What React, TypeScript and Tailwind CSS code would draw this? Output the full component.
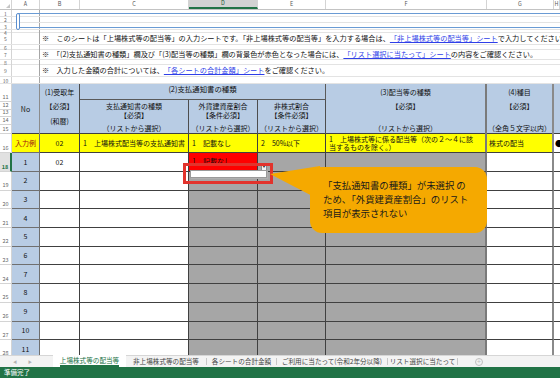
import React from 'react';

const GRID = 'grid grid-cols-[12px_28px_40px_109px_69px_68px_161px_67px_6px]';

type TopRow = { n: number; h: string; text?: React.ReactNode };

const Link = ({ children }: { children: React.ReactNode }) => (
  <span className="text-[#2f3fe8] underline decoration-[0.5px] underline-offset-[1px]">{children}</span>
);

// rows 1-10 above the table (heights picked to match the sheet)
const topRows: TopRow[] = [
  { n: 1, h: 'h-[7px]' },
  { n: 2, h: 'h-[6px]' },
  { n: 3, h: 'h-[7px]' },
  { n: 4, h: 'h-[3px]' },
  {
    n: 5,
    h: 'h-[12px]',
    text: (
      <>
        ※　このシートは「上場株式等の配当等」の入力シートです。「非上場株式等の配当等」を入力する場合は、
        <Link>「非上場株式等の配当等」シート</Link>で入力してください。
      </>
    ),
  },
  { n: 6, h: 'h-[5px]' },
  {
    n: 7,
    h: 'h-[10px]',
    text: (
      <>
        ※　「(2)支払通知書の種類」欄及び「(3)配当等の種類」欄の背景色が赤色となった場合には、
        <Link>「リスト選択に当たって」シート</Link>の内容をご確認ください。
      </>
    ),
  },
  { n: 8, h: 'h-[5px]' },
  {
    n: 9,
    h: 'h-[12px]',
    text: (
      <>
        ※　入力した金額の合計については、<Link>「各シートの合計金額」シート</Link>をご確認ください。
      </>
    ),
  },
  { n: 10, h: 'h-[7px]' },
];

const RowNum = ({ n, active }: { n: string; active?: boolean }) =>
  active ? (
    <div className="flex items-end justify-center border-b border-r-2 border-b-[#d4d4d4] border-r-[#217346] bg-[#e1e1e1] pb-[1px] text-[5.5px] font-bold leading-none text-[#217346]">
      {n}
    </div>
  ) : (
    <div className="flex items-end justify-center border-b border-r border-[#d4d4d4] bg-white pb-[1px] text-[5.5px] leading-none text-[#666]">
      {n}
    </div>
  );

const bodyRows = Array.from({ length: 10 }, (_, i) => ({ label: String(19 + i), no: String(2 + i) }));

export default function App() {
  return (
    <div className="relative h-[378px] w-[560px] overflow-hidden bg-white font-['Noto_Sans_CJK_JP','Noto_Sans',sans-serif] text-[#1a1a1a]">
      {/* column letters */}
      <div className={`${GRID} h-[10px] border-b border-[#c3c3c3] text-[5.5px] leading-none text-[#555]`}>
        <div className="relative border-r border-[#d4d4d4]">
          <span className="absolute bottom-[1px] right-[1px] border-b-[4px] border-l-[4px] border-b-[#c6c6c6] border-l-transparent" />
        </div>
        {['A', 'B', 'C', 'D', 'E', 'F', 'G', 'H'].map((c) =>
          c === 'D' ? (
            <div key={c} className="flex items-center justify-center border-b-2 border-r border-b-[#217346] border-r-[#d4d4d4] bg-[#d2d2d2] text-[#1d5b38]">
              {c}
            </div>
          ) : (
            <div key={c} className="flex items-center justify-center border-r border-[#d4d4d4]">
              {c}
            </div>
          )
        )}
      </div>

      {/* rows 1-10 */}
      {topRows.map((r) => (
        <div key={r.n} className={`${GRID} ${r.h} border-b border-[#e3e3e3]`}>
          <div className="flex items-center justify-center border-r border-[#d4d4d4] text-[5px] leading-none text-[#666]">
            {r.n}
          </div>
          <div className="border-r border-[#a6a6a6]" />
          <div className="col-span-7 flex items-center whitespace-nowrap pl-[2px] text-[7.2px] leading-none text-[#111]">
            {r.text}
          </div>
        </div>
      ))}

      {/* header rows 11-15 */}
      <div className="flex h-[50px]">
        <div className="flex w-[12px] flex-col text-[5.5px] leading-none text-[#666]">
          <div className="flex h-[18px] items-end justify-center border-b border-r border-[#d4d4d4] pb-[1px]">11</div>
          <div className="flex h-[8px] items-end justify-center border-b border-r border-[#d4d4d4] pb-[1px]">12</div>
          <div className="flex h-[7px] items-end justify-center border-b border-r border-[#d4d4d4] pb-[1px]">13</div>
          <div className="flex h-[8px] items-end justify-center border-b border-r border-[#d4d4d4] pb-[1px]">14</div>
          <div className="flex h-[9px] items-end justify-center border-b border-r border-[#d4d4d4] pb-[1px]">15</div>
        </div>
        <div className="grid flex-1 grid-cols-[28px_40px_109px_69px_68px_161px_67px_6px] grid-rows-[16px_34px] border-b border-[#404040] bg-[#b8cce4] text-[7px] leading-[9px] text-[#111]">
          <div className="row-span-2 flex items-center justify-center border-r border-[#8c8c8c]">No</div>
          <div className="row-span-2 flex flex-col items-center border-r border-[#4d4d4d] pt-[4px]">
            <span>(1)受取年</span>
            <span className="mt-[4.5px]">【必須】</span>
            <span className="mt-[6px]">(和暦)</span>
          </div>
          <div className="col-span-3 flex justify-center border-b border-r border-[#5a5a5a] text-[7.4px]">(2)支払通知書の種類</div>
          <div className="row-span-2 flex flex-col items-center border-r-2 border-[#7a7a7a] pt-[3.5px]">
            <span>(3)配当等の種類</span>
            <span className="mt-[5px]">【必須】</span>
            <span className="mt-[13px]">（リストから選択）</span>
          </div>
          <div className="row-span-2 flex flex-col items-center border-r-2 border-[#8a8a8a] pt-[3.5px]">
            <span>(4)種目</span>
            <span className="mt-[5px]">【必須】</span>
            <span className="mt-[13px]">（全角５文字以内）</span>
          </div>
          <div className="row-span-2" />
          <div className="flex flex-col items-center border-r border-[#4d4d4d] pt-[1.5px]">
            <span>支払通知書の種類</span>
            <span>【必須】</span>
            <span className="mt-[4px]">（リストから選択）</span>
          </div>
          <div className="flex flex-col items-center border-r border-[#4d4d4d] pt-[1.5px]">
            <span>外貨建資産割合</span>
            <span>【条件必須】</span>
            <span className="mt-[4px]">（リストから選択）</span>
          </div>
          <div className="flex flex-col items-center border-r border-[#4d4d4d] pt-[1.5px]">
            <span>非株式割合</span>
            <span>【条件必須】</span>
            <span className="mt-[4px]">（リストから選択）</span>
          </div>
        </div>
      </div>

      {/* data rows */}
      <div className="h-[221px] overflow-hidden text-[7px] leading-[9px] text-[#111]">
        <div className={`${GRID} h-[19px]`}>
          <RowNum n="16" />
          <div className="flex items-center justify-center border-b border-r border-[#6f6f6f] bg-[#ffff00] text-[#a01010]">入力例</div>
          <div className="flex items-center justify-center border-b border-r border-[#404040] bg-[#ffff00]">02</div>
          <div className="flex items-center overflow-hidden whitespace-nowrap border-b border-r border-[#404040] bg-[#ffff00] pl-[3px]">
            1　上場株式配当等の支払通知書
          </div>
          <div className="flex items-center overflow-hidden whitespace-nowrap border-b border-r border-[#404040] bg-[#ffff00] pl-[3px]">1　記載なし</div>
          <div className="flex items-center overflow-hidden whitespace-nowrap border-b border-r border-[#404040] bg-[#ffff00] pl-[3px]">2　50%以下</div>
          <div className="flex flex-col justify-center overflow-hidden whitespace-nowrap border-b border-r-2 border-b-[#404040] border-r-[#7a7a7a] bg-[#ffff00] pl-[3px] leading-[8.5px]">
            <span>1　上場株式等に係る配当等（次の２～４に該</span>
            <span>当するものを除く。）</span>
          </div>
          <div className="flex items-center overflow-hidden whitespace-nowrap border-b border-r-2 border-b-[#404040] border-r-[#8a8a8a] bg-[#ffff00] pl-[2px]">株式の配当</div>
          <div className="flex items-center overflow-hidden border-b border-[#404040] pl-[1px] text-[8px] text-black">●</div>
        </div>

        <div className={`${GRID} h-[19px]`}>
          <RowNum n="18" active />
          <div className="flex items-center justify-center border-b border-r border-[#6f6f6f] bg-[#b8cce4]">1</div>
          <div className="flex items-center justify-center border-b border-r border-[#404040]">02</div>
          <div className="border-b border-r border-[#404040]" />
          <div className="flex items-start overflow-hidden whitespace-nowrap border-b border-r border-[#404040] bg-[#ff0000] pl-[3px] pt-[4px]">1　記載なし</div>
          <div className="border-b border-r border-[#404040] bg-[#a6a6a6]" />
          <div className="border-b border-r-2 border-b-[#404040] border-r-[#7a7a7a] bg-[#a6a6a6]" />
          <div className="border-b border-r-2 border-b-[#404040] border-r-[#8a8a8a]" />
          <div className="border-b border-[#404040]" />
        </div>

        {bodyRows.map((r) => (
          <div key={r.label} className={`${GRID} h-[18.7px]`}>
            <RowNum n={r.label} />
            <div className="flex items-center justify-center border-b border-r border-[#6f6f6f] bg-[#b8cce4]">{r.no}</div>
            <div className="border-b border-r border-[#404040]" />
            <div className="border-b border-r border-[#404040]" />
            <div className="border-b border-r border-[#404040] bg-[#a6a6a6]" />
            <div className="border-b border-r border-[#404040] bg-[#a6a6a6]" />
            <div className="border-b border-r-2 border-b-[#404040] border-r-[#7a7a7a] bg-[#a6a6a6]" />
            <div className="border-b border-r-2 border-b-[#404040] border-r-[#8a8a8a]" />
            <div className="border-b border-[#404040]" />
          </div>
        ))}
      </div>

      {/* sheet tabs */}
      <div className="flex h-[12px] items-stretch border-t border-[#d6d6d6] bg-[#f3f3f3] text-[6.6px] leading-none text-[#444]">
        <div className="flex w-[53px] items-center gap-[11px] pl-[13px] text-[4px] text-[#b3b3b3]">
          <span>◀</span>
          <span>▶</span>
        </div>
        <div className="-mt-px flex w-[73px] items-center justify-center bg-white text-[#217346]">
          <span className="border-b-2 border-[#217346] pb-[1px] pt-[2px]">上場株式等の配当等</span>
        </div>
        <div className="my-[2px] flex w-[81px] items-center justify-center border-r border-[#c8c8c8]">非上場株式等の配当等</div>
        <div className="my-[2px] flex w-[70px] items-center justify-center border-r border-[#c8c8c8]">各シートの合計金額</div>
        <div className="my-[2px] flex w-[111px] items-center justify-center border-r border-[#c8c8c8]">ご利用に当たって(令和2年分以降)</div>
        <div className="my-[2px] flex w-[70px] items-center justify-center border-r border-[#c8c8c8]">リスト選択に当たって</div>
        <div className="flex w-[42px] items-center justify-center">
          <span className="flex h-[8px] w-[8px] items-center justify-center rounded-full border border-[#c0c0c0] text-[7px] text-[#c0c0c0]">+</span>
        </div>
      </div>

      {/* status bar */}
      <div className="flex h-[11px] items-center bg-[#217346] pl-[4px] text-[6.5px] leading-none text-white">準備完了</div>

      {/* selected text box over rows 1-3 */}
      <div className="absolute left-[18px] right-[-4px] top-[13px] h-[15px] border border-[#6a9bd4]" />
      <div className="absolute left-[16px] top-[13px] h-[17px] w-[4px] rounded-full border border-[#5b8fcf] bg-white" />

      {/* dropdown */}
      <div className="absolute left-[261px] top-[164px] flex h-[7px] w-[6px] items-center justify-center border border-[#8a8a8a] bg-[#f2f2f2] text-[3px] leading-none text-[#333]">▼</div>
      <div className="absolute left-[190px] top-[170px] h-[8px] w-[77px] border border-[#9a9a9a] bg-white shadow-[1px_1px_0_#b0b0b0]" />

      {/* red annotation */}
      <div className="absolute left-[183px] top-[163px] h-[21px] w-[90px] border-[3px] border-[#e2332c]" />

      {/* callout */}
      <svg className="absolute left-[266px] top-[160px]" width="54" height="44" viewBox="0 0 54 44">
        <polygon points="4,14 54,6 54,40" fill="#f5a900" />
      </svg>
      <div className="absolute left-[310px] top-[167px] h-[66px] w-[177px] rounded-[12px] bg-[#f5a900] pl-[13px] pt-[11px] text-[9.4px] leading-[14px] text-[#1a1a1a]">
        「支払通知書の種類」が未選択 の<br />
        ため、「外貨建資産割合」のリスト<br />
        項目が表示されない
      </div>
    </div>
  );
}
